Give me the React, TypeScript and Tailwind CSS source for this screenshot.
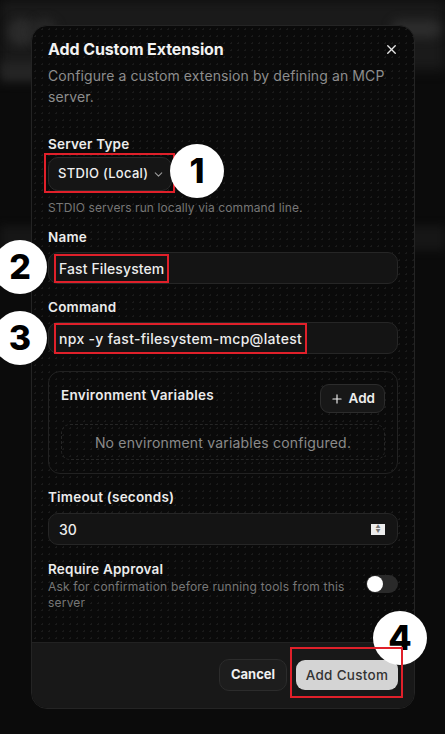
import { X, ChevronDown, Plus } from "lucide-react";

function Badge({ n, className }: { n: string; className: string }) {
  return (
    <div
      className={`absolute grid h-[54px] w-[54px] place-items-center rounded-full bg-white text-[34px] font-extrabold leading-none text-black ${className}`}
    >
      {n}
    </div>
  );
}

function RedBox({ className }: { className: string }) {
  return <span className={`pointer-events-none absolute z-20 border-2 border-[#e0202a] ${className}`} />;
}

function Label({ children, className = "" }: { children: React.ReactNode; className?: string }) {
  return (
    <div className={`text-[13.5px] font-semibold leading-5 tracking-[0.2px] text-[#ececec] ${className}`}>
      {children}
    </div>
  );
}

export default function App() {
  return (
    <div
      className="relative h-[734px] w-[445px] overflow-hidden bg-[#0b0b0b]"
      style={{ fontFamily: "Inter, 'Noto Sans', sans-serif" }}
    >
      {/* blurred app behind the dialog */}
      <div className="absolute inset-x-0 top-0 h-[70px] bg-[#1a1a1a] blur-[6px]" />
      <div className="absolute left-[8px] top-[18px] h-[28px] w-[28px] rounded-full bg-[#2a2a2a] blur-[4px]" />
      <div className="absolute left-[30px] top-[18px] h-[28px] w-[28px] rounded-full bg-[#262626] blur-[4px]" />
      <div className="absolute right-[4px] top-[20px] h-[18px] w-[50px] rounded-full bg-[#2c2c2c] blur-[5px]" />
      <div className="absolute left-0 top-[62px] h-[20px] w-[40px] bg-[#252525] blur-[5px]" />
      <div className="absolute inset-x-0 top-[226px] h-[24px] bg-[#161616] blur-[4px]" />

      <div className="relative z-10 ml-[31px] mt-[25px] w-[384px] overflow-hidden rounded-[16px] border border-[#242424] bg-[#0a0a0a] bg-[radial-gradient(#1a1a1a_1px,transparent_1px)] bg-[size:7px_7px]">
        <div className="px-4 pb-[31px] pt-[11px]">
          <div className="flex items-center justify-between">
            <h2 className="text-[16px] font-bold leading-6 tracking-[-0.1px] text-[#f2f2f2]">Add Custom Extension</h2>
            <X size={15} strokeWidth={2.2} className="mr-[-1px] text-[#e5e5e5]" />
          </div>
          <p className="mt-[4px] text-[14px] leading-[21px] tracking-[0.1px] text-[#8d8d8d]">
            Configure a custom extension by defining an MCP server.
          </p>

          <Label className="mt-[27px]">Server Type</Label>
          <div className="relative mt-[3px] w-fit">
            <div className="flex h-[34px] items-center gap-[4px] whitespace-nowrap rounded-[10px] border border-[#2a2a2a] bg-[#151515] pl-[9px] pr-[6px] text-[13px] font-medium tracking-[0.3px] text-[#f0f0f0]">
              STDIO (Local)
              <ChevronDown size={13} className="text-[#9a9a9a]" />
            </div>
            <RedBox className="-bottom-[2px] -left-[4px] -right-[3px] -top-[4px]" />
          </div>
          <div className="mt-[9px] text-[12px] leading-4 tracking-[0.1px] text-[#777777]">
            STDIO servers run locally via command line.
          </div>

          <Label className="mt-[11px]">Name</Label>
          <div className="mt-[5px] flex h-8 items-center rounded-[10px] border border-[#262626] bg-[#141414] pl-[5px]">
            <span className="flex h-[29px] items-center border-2 border-[#e0202a] px-[3px] text-[14px] font-medium tracking-[0.1px] text-[#ededed]">
              Fast Filesystem
            </span>
          </div>

          <Label className="mt-[13px]">Command</Label>
          <div className="mt-[5px] flex h-8 items-center rounded-[10px] border border-[#262626] bg-[#141414] pl-[5px]">
            <span className="flex h-[31px] items-center border-2 border-[#e0202a] px-[3px] text-[14px] font-medium tracking-[0.3px] text-[#ededed]">
              npx -y fast-filesystem-mcp@latest
            </span>
          </div>

          <div className="mt-[17px] rounded-[12px] border border-[#222222] px-[12px] pb-[13px] pt-[12px]">
            <div className="flex items-start justify-between">
              <div className="mt-[1px] text-[13.5px] font-semibold leading-5 tracking-[0.3px] text-[#ececec]">
                Environment Variables
              </div>
              <button className="flex h-[29px] items-center gap-[5px] rounded-[9px] border border-[#2c2c2c] bg-[#171717] px-[9px] text-[13.5px] font-semibold text-[#ededed]">
                <Plus size={14} strokeWidth={2} />
                Add
              </button>
            </div>
            <div className="mt-[11px] flex h-[36px] items-center justify-center rounded-[9px] border border-dashed border-[#262626] text-[14px] tracking-[0.2px] text-[#8a8a8a]">
              No environment variables configured.
            </div>
          </div>

          <Label className="mt-[13px]">Timeout (seconds)</Label>
          <div className="mt-[6px] flex h-[32px] items-center justify-between rounded-[10px] border border-[#262626] bg-[#141414] pl-[10px] pr-[12px]">
            <span className="text-[14px] font-medium text-[#ededed]">30</span>
            <div className="flex h-[11px] w-[14px] flex-col items-center justify-center bg-[#ececec] text-[5px] leading-[5px] text-[#777]">
              <span>▲</span>
              <span>▼</span>
            </div>
          </div>

          <div className="mt-[14px] flex items-center justify-between">
            <div>
              <Label>Require Approval</Label>
              <div className="w-[300px] text-[12px] leading-4 tracking-[0.2px] text-[#777777]">
                Ask for confirmation before running tools from this server
              </div>
            </div>
            <div className="-mt-[2px] flex h-[18px] w-[32px] items-center rounded-full bg-[#2a2a2a] pl-[1px]">
              <div className="h-[16px] w-[16px] rounded-full bg-white" />
            </div>
          </div>
        </div>

        <div className="flex h-[66px] items-start justify-end gap-[9px] border-t border-[#222222] bg-[#181818] pr-4 pt-[16px]">
          <button className="h-[32px] w-[68px] rounded-[10px] border border-[#2c2c2c] bg-[#1d1d1d] text-[13px] font-bold text-[#f0f0f0]">
            Cancel
          </button>
          <button className="mt-[1px] h-[30px] w-[102px] rounded-[9px] bg-[#d4d4d4] text-[13.5px] font-medium tracking-[0.3px] text-[#333333]">
            Add Custom
          </button>
        </div>
      </div>

      <Badge n="1" className="left-[170px] top-[144px] z-30" />
      <Badge n="2" className="-left-[7px] top-[240px] z-30" />
      <Badge n="3" className="-left-[7px] top-[311px] z-30" />
      <Badge n="4" className="left-[373px] top-[611px] z-30" />
      <RedBox className="left-[290px] top-[647px] h-[51px] w-[113px] z-40" />
    </div>
  );
}
